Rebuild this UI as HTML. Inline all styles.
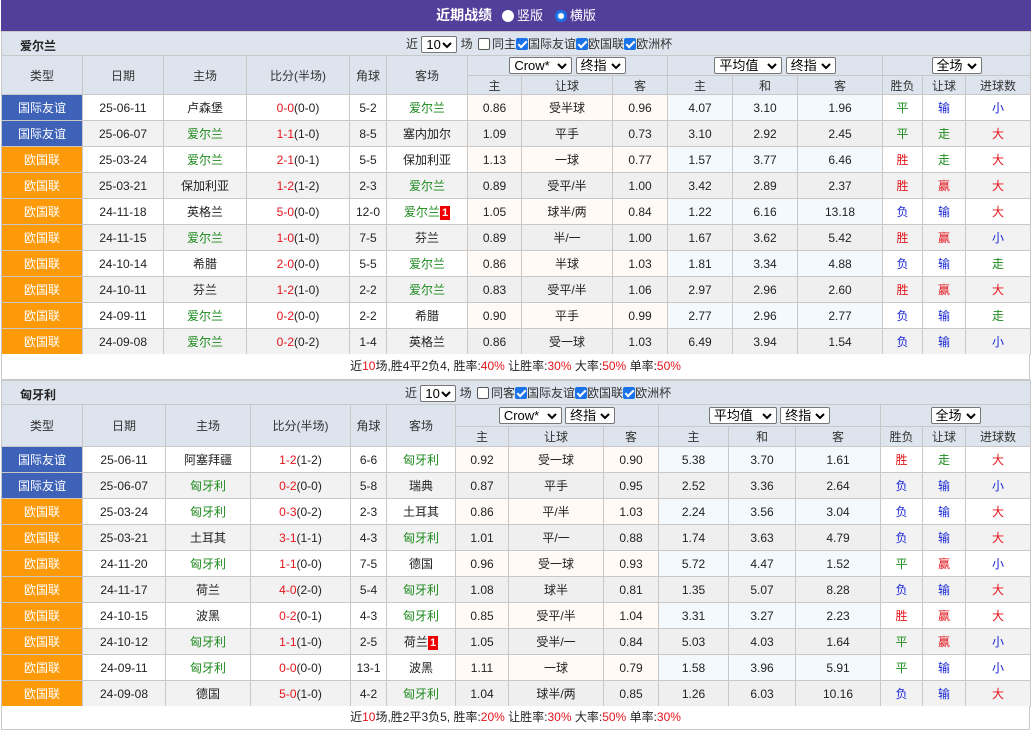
<!DOCTYPE html>
<html><head><meta charset="utf-8">
<style>
*{margin:0;padding:0;box-sizing:border-box}
body{width:1033px;height:730px;overflow:hidden;background:#fff;font-family:"Liberation Sans","Noto Sans CJK SC",sans-serif;font-size:12px;color:#222;position:relative}
.top{position:absolute;left:1px;top:0;width:1030px;height:31px;background:#523f9b;color:#fff;text-align:center;line-height:31px;font-size:14px;font-weight:bold}
.top .r{display:inline-block;width:12px;height:12px;border-radius:50%;background:#fff;vertical-align:-2px;margin:0 3px 0 6px}
.top .r2{display:inline-block;width:12px;height:12px;border-radius:50%;background:#fff;border:3px solid #1a73e8;vertical-align:-2px;margin:0 3px 0 8px}
.top span.t{font-weight:normal;font-size:13px}
.bar{position:absolute;left:1px;width:1030px;height:24px;background:#dde4ee;border:1px solid #c8c8c8;border-bottom:none}
.bar .nm{position:absolute;left:18px;top:5px;font-weight:bold;font-size:12px}
.bar .ctl{position:absolute;top:3px;font-size:12px;color:#333;white-space:nowrap}
.sel{display:inline-block;height:17px;border:1px solid #777;background:#fff;border-radius:2px;padding:0 4px;line-height:15px;font-size:13px;vertical-align:middle;color:#000;position:relative}
.sel svg{position:absolute;right:4px;top:5px}
.cb{display:inline-block;width:12px;height:12px;border:1px solid #555;border-radius:2px;background:#fff;vertical-align:-2px;margin:0 2px}
.ck{display:inline-block;width:12px;height:12px;border-radius:2px;background:#1a73e8;vertical-align:-2px;position:relative}
.ck:after{content:"";position:absolute;left:4px;top:1px;width:3px;height:7px;border:solid #fff;border-width:0 2px 2px 0;transform:rotate(45deg)}
table{position:absolute;left:1px;border-collapse:collapse;table-layout:fixed;width:1029px}
td{border:1px solid #c8c8c8;text-align:center;white-space:nowrap;overflow:hidden;font-size:12px;padding:0}
tr.h td{background:#dde4ee;color:#333}
tr.d td{height:26px}
tr.d:nth-child(even) td{background:#f2f2f2}
tr.d td.o{background:#fffaf6}
tr.d td.e{background:#f4f9fd}
tr.d:nth-child(even) td.o,tr.d:nth-child(even) td.e{background:#efefef}
td.a{background:#3d62b8!important;color:#fff}
td.b{background:#fd9a0a!important;color:#fff}
.g{color:#1d8a1d}.rd{color:#e3141b}.bl{color:#1b27d6}
.n{display:inline-block;background:#e00;color:#fff;font-weight:bold;font-size:11px;line-height:14px;padding:0 2px}
.sum{position:absolute;left:1px;width:1029px;text-align:center;border:1px solid #c8c8c8;border-top:none;font-size:12px;background:#fff}
.sum i{font-style:normal;color:#e3141b}
</style></head><body>
<div class="top">近期战绩 <span class="r"></span><span class="t">竖版</span> <span class="r2"></span><span class="t">横版</span></div>

<div class="bar" style="top:31px"><span class="nm">爱尔兰</span>
<span class="ctl" style="left:404px">近 <span class="sel" style="width:36px">10<svg width="10" height="7"><path d="M1 1L5 5L9 1" stroke="#000" stroke-width="2" fill="none"/></svg></span> 场 <span class="cb"></span>同主<span class="ck"></span>国际友谊<span class="ck"></span>欧国联<span class="ck"></span>欧洲杯</span></div>

<table style="top:55px">
<colgroup><col width="81"><col width="81"><col width="83"><col width="103"><col width="37"><col width="81"><col width="54"><col width="91"><col width="55"><col width="65"><col width="65"><col width="85"><col width="40"><col width="43"><col width="65"></colgroup>
<tr class="h" style="height:20px"><td rowspan="2">类型</td><td rowspan="2">日期</td><td rowspan="2">主场</td><td rowspan="2">比分(半场)</td><td rowspan="2">角球</td><td rowspan="2">客场</td>
<td colspan="3"><span class="sel" style="width:63px;text-align:left">Crow*<svg width="10" height="7"><path d="M1 1L5 5L9 1" stroke="#000" stroke-width="2" fill="none"/></svg></span> <span class="sel" style="width:50px;text-align:left">终指<svg width="10" height="7"><path d="M1 1L5 5L9 1" stroke="#000" stroke-width="2" fill="none"/></svg></span></td>
<td colspan="3"><span class="sel" style="width:68px;text-align:left">平均值<svg width="10" height="7"><path d="M1 1L5 5L9 1" stroke="#000" stroke-width="2" fill="none"/></svg></span> <span class="sel" style="width:50px;text-align:left">终指<svg width="10" height="7"><path d="M1 1L5 5L9 1" stroke="#000" stroke-width="2" fill="none"/></svg></span></td>
<td colspan="3"><span class="sel" style="width:50px;text-align:left">全场<svg width="10" height="7"><path d="M1 1L5 5L9 1" stroke="#000" stroke-width="2" fill="none"/></svg></span></td></tr>
<tr class="h" style="height:19px"><td>主</td><td>让球</td><td>客</td><td>主</td><td>和</td><td>客</td><td>胜负</td><td>让球</td><td>进球数</td></tr>
<tr class="d"><td class="a">国际友谊</td><td>25-06-11</td><td>卢森堡</td><td><span class="rd">0-0</span>(0-0)</td><td>5-2</td><td class="g">爱尔兰</td><td class="o">0.86</td><td class="o">受半球</td><td class="o">0.96</td><td class="e">4.07</td><td class="e">3.10</td><td class="e">1.96</td><td class="g">平</td><td class="bl">输</td><td class="bl">小</td></tr>
<tr class="d"><td class="a">国际友谊</td><td>25-06-07</td><td class="g">爱尔兰</td><td><span class="rd">1-1</span>(1-0)</td><td>8-5</td><td>塞内加尔</td><td class="o">1.09</td><td class="o">平手</td><td class="o">0.73</td><td class="e">3.10</td><td class="e">2.92</td><td class="e">2.45</td><td class="g">平</td><td class="g">走</td><td class="rd">大</td></tr>
<tr class="d"><td class="b">欧国联</td><td>25-03-24</td><td class="g">爱尔兰</td><td><span class="rd">2-1</span>(0-1)</td><td>5-5</td><td>保加利亚</td><td class="o">1.13</td><td class="o">一球</td><td class="o">0.77</td><td class="e">1.57</td><td class="e">3.77</td><td class="e">6.46</td><td class="rd">胜</td><td class="g">走</td><td class="rd">大</td></tr>
<tr class="d"><td class="b">欧国联</td><td>25-03-21</td><td>保加利亚</td><td><span class="rd">1-2</span>(1-2)</td><td>2-3</td><td class="g">爱尔兰</td><td class="o">0.89</td><td class="o">受平/半</td><td class="o">1.00</td><td class="e">3.42</td><td class="e">2.89</td><td class="e">2.37</td><td class="rd">胜</td><td class="rd">赢</td><td class="rd">大</td></tr>
<tr class="d"><td class="b">欧国联</td><td>24-11-18</td><td>英格兰</td><td><span class="rd">5-0</span>(0-0)</td><td>12-0</td><td><span class="g">爱尔兰</span><span class="n">1</span></td><td class="o">1.05</td><td class="o">球半/两</td><td class="o">0.84</td><td class="e">1.22</td><td class="e">6.16</td><td class="e">13.18</td><td class="bl">负</td><td class="bl">输</td><td class="rd">大</td></tr>
<tr class="d"><td class="b">欧国联</td><td>24-11-15</td><td class="g">爱尔兰</td><td><span class="rd">1-0</span>(1-0)</td><td>7-5</td><td>芬兰</td><td class="o">0.89</td><td class="o">半/一</td><td class="o">1.00</td><td class="e">1.67</td><td class="e">3.62</td><td class="e">5.42</td><td class="rd">胜</td><td class="rd">赢</td><td class="bl">小</td></tr>
<tr class="d"><td class="b">欧国联</td><td>24-10-14</td><td>希腊</td><td><span class="rd">2-0</span>(0-0)</td><td>5-5</td><td class="g">爱尔兰</td><td class="o">0.86</td><td class="o">半球</td><td class="o">1.03</td><td class="e">1.81</td><td class="e">3.34</td><td class="e">4.88</td><td class="bl">负</td><td class="bl">输</td><td class="g">走</td></tr>
<tr class="d"><td class="b">欧国联</td><td>24-10-11</td><td>芬兰</td><td><span class="rd">1-2</span>(1-0)</td><td>2-2</td><td class="g">爱尔兰</td><td class="o">0.83</td><td class="o">受平/半</td><td class="o">1.06</td><td class="e">2.97</td><td class="e">2.96</td><td class="e">2.60</td><td class="rd">胜</td><td class="rd">赢</td><td class="rd">大</td></tr>
<tr class="d"><td class="b">欧国联</td><td>24-09-11</td><td class="g">爱尔兰</td><td><span class="rd">0-2</span>(0-0)</td><td>2-2</td><td>希腊</td><td class="o">0.90</td><td class="o">平手</td><td class="o">0.99</td><td class="e">2.77</td><td class="e">2.96</td><td class="e">2.77</td><td class="bl">负</td><td class="bl">输</td><td class="g">走</td></tr>
<tr class="d"><td class="b">欧国联</td><td>24-09-08</td><td class="g">爱尔兰</td><td><span class="rd">0-2</span>(0-2)</td><td>1-4</td><td>英格兰</td><td class="o">0.86</td><td class="o">受一球</td><td class="o">1.03</td><td class="e">6.49</td><td class="e">3.94</td><td class="e">1.54</td><td class="bl">负</td><td class="bl">输</td><td class="bl">小</td></tr>
</table>
<div class="sum" style="top:354px;height:26px;line-height:25px">近<i>10</i>场,胜4平2负4, 胜率:<i>40%</i> 让胜率:<i>30%</i> 大率:<i>50%</i> 单率:<i>50%</i></div>

<div class="bar" style="top:380px"><span class="nm">匈牙利</span>
<span class="ctl" style="left:403px">近 <span class="sel" style="width:36px">10<svg width="10" height="7"><path d="M1 1L5 5L9 1" stroke="#000" stroke-width="2" fill="none"/></svg></span> 场 <span class="cb"></span>同客<span class="ck"></span>国际友谊<span class="ck"></span>欧国联<span class="ck"></span>欧洲杯</span></div>

<table style="top:404px">
<colgroup><col width="81"><col width="83"><col width="85"><col width="100"><col width="36"><col width="69"><col width="53"><col width="95"><col width="55"><col width="70"><col width="67"><col width="85"><col width="42"><col width="43"><col width="65"></colgroup>
<tr class="h" style="height:22px"><td rowspan="2">类型</td><td rowspan="2">日期</td><td rowspan="2">主场</td><td rowspan="2">比分(半场)</td><td rowspan="2">角球</td><td rowspan="2">客场</td>
<td colspan="3"><span class="sel" style="width:63px;text-align:left">Crow*<svg width="10" height="7"><path d="M1 1L5 5L9 1" stroke="#000" stroke-width="2" fill="none"/></svg></span> <span class="sel" style="width:50px;text-align:left">终指<svg width="10" height="7"><path d="M1 1L5 5L9 1" stroke="#000" stroke-width="2" fill="none"/></svg></span></td>
<td colspan="3"><span class="sel" style="width:68px;text-align:left">平均值<svg width="10" height="7"><path d="M1 1L5 5L9 1" stroke="#000" stroke-width="2" fill="none"/></svg></span> <span class="sel" style="width:50px;text-align:left">终指<svg width="10" height="7"><path d="M1 1L5 5L9 1" stroke="#000" stroke-width="2" fill="none"/></svg></span></td>
<td colspan="3"><span class="sel" style="width:50px;text-align:left">全场<svg width="10" height="7"><path d="M1 1L5 5L9 1" stroke="#000" stroke-width="2" fill="none"/></svg></span></td></tr>
<tr class="h" style="height:20px"><td>主</td><td>让球</td><td>客</td><td>主</td><td>和</td><td>客</td><td>胜负</td><td>让球</td><td>进球数</td></tr>
<tr class="d"><td class="a">国际友谊</td><td>25-06-11</td><td>阿塞拜疆</td><td><span class="rd">1-2</span>(1-2)</td><td>6-6</td><td class="g">匈牙利</td><td class="o">0.92</td><td class="o">受一球</td><td class="o">0.90</td><td class="e">5.38</td><td class="e">3.70</td><td class="e">1.61</td><td class="rd">胜</td><td class="g">走</td><td class="rd">大</td></tr>
<tr class="d"><td class="a">国际友谊</td><td>25-06-07</td><td class="g">匈牙利</td><td><span class="rd">0-2</span>(0-0)</td><td>5-8</td><td>瑞典</td><td class="o">0.87</td><td class="o">平手</td><td class="o">0.95</td><td class="e">2.52</td><td class="e">3.36</td><td class="e">2.64</td><td class="bl">负</td><td class="bl">输</td><td class="bl">小</td></tr>
<tr class="d"><td class="b">欧国联</td><td>25-03-24</td><td class="g">匈牙利</td><td><span class="rd">0-3</span>(0-2)</td><td>2-3</td><td>土耳其</td><td class="o">0.86</td><td class="o">平/半</td><td class="o">1.03</td><td class="e">2.24</td><td class="e">3.56</td><td class="e">3.04</td><td class="bl">负</td><td class="bl">输</td><td class="rd">大</td></tr>
<tr class="d"><td class="b">欧国联</td><td>25-03-21</td><td>土耳其</td><td><span class="rd">3-1</span>(1-1)</td><td>4-3</td><td class="g">匈牙利</td><td class="o">1.01</td><td class="o">平/一</td><td class="o">0.88</td><td class="e">1.74</td><td class="e">3.63</td><td class="e">4.79</td><td class="bl">负</td><td class="bl">输</td><td class="rd">大</td></tr>
<tr class="d"><td class="b">欧国联</td><td>24-11-20</td><td class="g">匈牙利</td><td><span class="rd">1-1</span>(0-0)</td><td>7-5</td><td>德国</td><td class="o">0.96</td><td class="o">受一球</td><td class="o">0.93</td><td class="e">5.72</td><td class="e">4.47</td><td class="e">1.52</td><td class="g">平</td><td class="rd">赢</td><td class="bl">小</td></tr>
<tr class="d"><td class="b">欧国联</td><td>24-11-17</td><td>荷兰</td><td><span class="rd">4-0</span>(2-0)</td><td>5-4</td><td class="g">匈牙利</td><td class="o">1.08</td><td class="o">球半</td><td class="o">0.81</td><td class="e">1.35</td><td class="e">5.07</td><td class="e">8.28</td><td class="bl">负</td><td class="bl">输</td><td class="rd">大</td></tr>
<tr class="d"><td class="b">欧国联</td><td>24-10-15</td><td>波黑</td><td><span class="rd">0-2</span>(0-1)</td><td>4-3</td><td class="g">匈牙利</td><td class="o">0.85</td><td class="o">受平/半</td><td class="o">1.04</td><td class="e">3.31</td><td class="e">3.27</td><td class="e">2.23</td><td class="rd">胜</td><td class="rd">赢</td><td class="rd">大</td></tr>
<tr class="d"><td class="b">欧国联</td><td>24-10-12</td><td class="g">匈牙利</td><td><span class="rd">1-1</span>(1-0)</td><td>2-5</td><td>荷兰<span class="n">1</span></td><td class="o">1.05</td><td class="o">受半/一</td><td class="o">0.84</td><td class="e">5.03</td><td class="e">4.03</td><td class="e">1.64</td><td class="g">平</td><td class="rd">赢</td><td class="bl">小</td></tr>
<tr class="d"><td class="b">欧国联</td><td>24-09-11</td><td class="g">匈牙利</td><td><span class="rd">0-0</span>(0-0)</td><td>13-1</td><td>波黑</td><td class="o">1.11</td><td class="o">一球</td><td class="o">0.79</td><td class="e">1.58</td><td class="e">3.96</td><td class="e">5.91</td><td class="g">平</td><td class="bl">输</td><td class="bl">小</td></tr>
<tr class="d"><td class="b">欧国联</td><td>24-09-08</td><td>德国</td><td><span class="rd">5-0</span>(1-0)</td><td>4-2</td><td class="g">匈牙利</td><td class="o">1.04</td><td class="o">球半/两</td><td class="o">0.85</td><td class="e">1.26</td><td class="e">6.03</td><td class="e">10.16</td><td class="bl">负</td><td class="bl">输</td><td class="rd">大</td></tr>
</table>
<div class="sum" style="top:706px;height:24px;line-height:23px">近<i>10</i>场,胜2平3负5, 胜率:<i>20%</i> 让胜率:<i>30%</i> 大率:<i>50%</i> 单率:<i>30%</i></div>
</body></html>
